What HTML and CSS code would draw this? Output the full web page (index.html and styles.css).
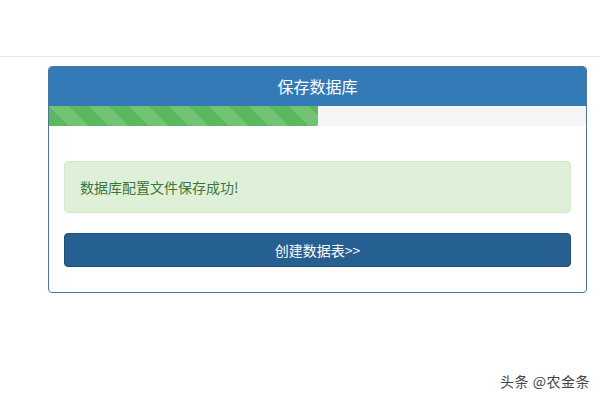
FILE: index.html
```html
<!DOCTYPE html>
<html lang="zh">
<head>
<meta charset="utf-8">
<link rel="stylesheet" href="styles.css">
</head>
<body>
<div class="topbar"></div>
<div class="wrap">
  <div class="panel">
    <div class="panel-heading">保存数据库</div>
    <div class="progress"><div class="progress-bar" style="width:50%"></div></div>
    <div class="panel-body">
      <div class="alert">数据库配置文件保存成功!</div>
      <button class="btn">创建数据表&gt;&gt;</button>
    </div>
  </div>
</div>
<div class="watermark">头条 @农金条</div>
</body>
</html>
```
FILE: styles.css
```css
html, body {
  margin: 0;
  padding: 0;
  width: 600px;
  height: 400px;
  background: #fff;
  font-family: "Microsoft YaHei", "Noto Sans CJK SC", "Liberation Sans", sans-serif;
  overflow: hidden;
  position: relative;
}
.topbar {
  height: 56px;
  border-bottom: 1px solid #e8e8e8;
}
.wrap {
  padding: 9px 13px 0 48px;
}
.panel {
  border: 1px solid #4d77a0;
  border-radius: 4px;
  overflow: hidden;
  background: #fff;
}
.panel-heading {
  background: #337ab7;
  color: #fff;
  height: 39px;
  line-height: 39px;
  text-align: center;
  font-size: 16px;
}
.progress {
  height: 20px;
  background: #f5f5f5;
}
.progress-bar {
  height: 100%;
  background-color: #5cb85c;
  background-image: linear-gradient(45deg, rgba(255,255,255,.15) 25%, transparent 25%, transparent 50%, rgba(255,255,255,.15) 50%, rgba(255,255,255,.15) 75%, transparent 75%, transparent);
  background-size: 40px 40px;
  border-bottom-right-radius: 2px;
}
.panel-body {
  padding: 35px 15px 25px 15px;
  display: flex;
  flex-direction: column;
  gap: 20px;
}
.alert {
  background: #dff0d8;
  border: 1px solid #d6e9c6;
  color: #3c763d;
  border-radius: 4px;
  height: 50px;
  line-height: 50px;
  padding: 0 15px;
  font-size: 14px;
}
.btn {
  height: 34px;
  border: 1px solid #204d74;
  border-radius: 4px;
  background: #265f92;
  color: #fff;
  font-family: inherit;
  font-size: 14px;
  padding: 0;
  margin: 0;
}
.watermark {
  position: absolute;
  right: 10px;
  top: 371px;
  font-size: 14px;
  color: #444;
  text-shadow: 0 0 2px #fff;
  letter-spacing: 0.5px;
}
```
